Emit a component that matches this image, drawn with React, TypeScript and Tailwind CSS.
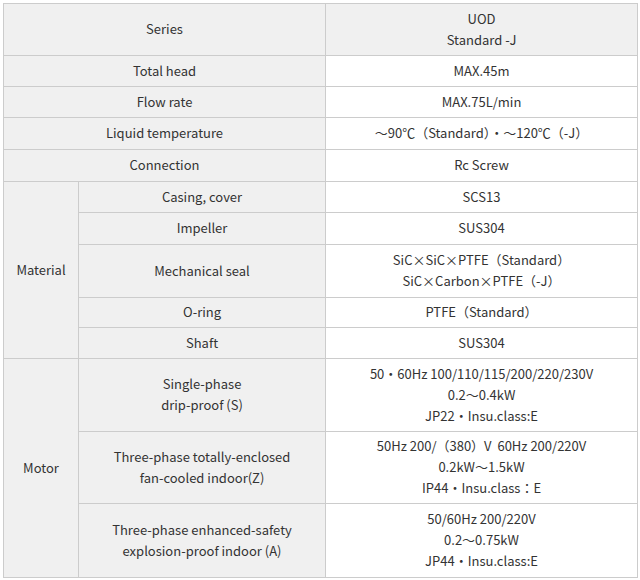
const cellL = "border border-[#cccccc] bg-[#f0f0f0] text-center align-middle px-2 pt-0 pb-[2px]";
const cellV = "border border-[#cccccc] bg-white text-center align-middle px-2 pt-0 pb-[2px]";

function Lines({ items }: { items: string[] }) {
  return (
    <>
      {items.map((t, i) => (
        <div key={i} className="whitespace-pre">{t}</div>
      ))}
    </>
  );
}

export default function App() {
  return (
    <div className="w-[640px] h-[580px] bg-white p-[3px] text-[13px] leading-[21px] text-[#333333] font-['Noto_Sans_CJK_JP','Noto_Sans',sans-serif]">
      <table className="w-[634px] border-collapse table-fixed">
        <colgroup>
          <col className="w-[75px]" />
          <col className="w-[247px]" />
          <col className="w-[312px]" />
        </colgroup>
        <tbody>
          <tr className="h-[52px]">
            <td colSpan={2} className={cellL}>Series</td>
            <td className={cellL}>
              <Lines items={["UOD", "Standard -J"]} />
            </td>
          </tr>
          <tr className="h-[31px]">
            <td colSpan={2} className={cellL}>Total head</td>
            <td className={cellV}>MAX.45m</td>
          </tr>
          <tr className="h-[31px]">
            <td colSpan={2} className={cellL}>Flow rate</td>
            <td className={cellV}>MAX.75L/min</td>
          </tr>
          <tr className="h-[32px]">
            <td colSpan={2} className={cellL}>Liquid temperature</td>
            <td className={cellV}>～90℃（Standard）・～120℃（-J）</td>
          </tr>
          <tr className="h-[32px]">
            <td colSpan={2} className={cellL}>Connection</td>
            <td className={cellV}>Rc Screw</td>
          </tr>
          <tr className="h-[31px]">
            <td rowSpan={5} className={cellL}>Material</td>
            <td className={cellL}>Casing, cover</td>
            <td className={cellV}>SCS13</td>
          </tr>
          <tr className="h-[32px]">
            <td className={cellL}>Impeller</td>
            <td className={cellV}>SUS304</td>
          </tr>
          <tr className="h-[53px]">
            <td className={cellL}>Mechanical seal</td>
            <td className={cellV}>
              <Lines items={["SiC×SiC×PTFE（Standard）", "SiC×Carbon×PTFE（-J）"]} />
            </td>
          </tr>
          <tr className="h-[30px]">
            <td className={cellL}>O-ring</td>
            <td className={cellV}>PTFE（Standard）</td>
          </tr>
          <tr className="h-[31px]">
            <td className={cellL}>Shaft</td>
            <td className={cellV}>SUS304</td>
          </tr>
          <tr className="h-[73px]">
            <td rowSpan={3} className={cellL}>Motor</td>
            <td className={cellL}>
              <Lines items={["Single-phase", "drip-proof (S)"]} />
            </td>
            <td className={cellV}>
              <Lines items={["50・60Hz 100/110/115/200/220/230V", "0.2～0.4kW", "JP22・Insu.class:E"]} />
            </td>
          </tr>
          <tr className="h-[72px]">
            <td className={cellL}>
              <Lines items={["Three-phase totally-enclosed", "fan-cooled indoor(Z)"]} />
            </td>
            <td className={cellV}>
              <Lines items={["50Hz 200/（380）V  60Hz 200/220V", "0.2kW～1.5kW", "IP44・Insu.class：E"]} />
            </td>
          </tr>
          <tr className="h-[74px]">
            <td className={cellL}>
              <Lines items={["Three-phase enhanced-safety", "explosion-proof indoor (A)"]} />
            </td>
            <td className={cellV}>
              <Lines items={["50/60Hz 200/220V", "0.2～0.75kW", "JP44・Insu.class:E"]} />
            </td>
          </tr>
        </tbody>
      </table>
    </div>
  );
}
